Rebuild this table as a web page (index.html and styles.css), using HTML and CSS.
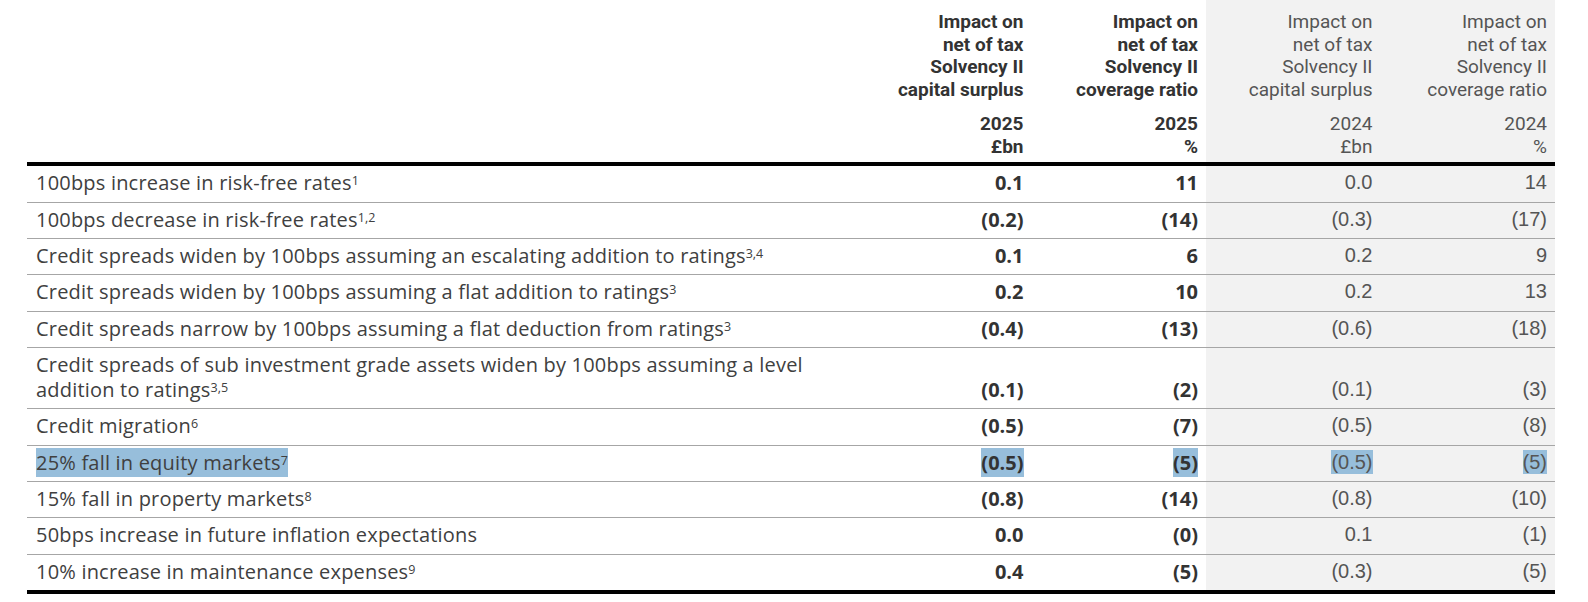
FILE: index.html
```html
<!DOCTYPE html>
<html lang="en">
<head>
<meta charset="utf-8">
<title>Solvency II sensitivities</title>
<link rel="stylesheet" href="styles.css">
</head>
<body>
<div class="page">
<table class="sens">
  <colgroup>
    <col class="c-label">
    <col class="c-num">
    <col class="c-num">
    <col class="c-num">
    <col class="c-num">
  </colgroup>
  <thead>
    <tr>
      <th class="lab"></th>
      <th class="cur"><div class="hd">Impact on<br>net of tax<br>Solvency II<br>capital surplus</div><div class="unit">2025<br>£bn</div></th>
      <th class="cur"><div class="hd">Impact on<br>net of tax<br>Solvency II<br>coverage ratio</div><div class="unit">2025<br>%</div></th>
      <th class="prior"><div class="hd">Impact on<br>net of tax<br>Solvency II<br>capital surplus</div><div class="unit">2024<br>£bn</div></th>
      <th class="prior"><div class="hd">Impact on<br>net of tax<br>Solvency II<br>coverage ratio</div><div class="unit">2024<br>%</div></th>
    </tr>
  </thead>
  <tbody>
    <tr><td class="lab">100bps increase in risk-free rates<sup>1</sup></td><td class="cur">0.1</td><td class="cur">11</td><td class="prior">0.0</td><td class="prior">14</td></tr>
    <tr><td class="lab">100bps decrease in risk-free rates<sup>1,2</sup></td><td class="cur">(0.2)</td><td class="cur">(14)</td><td class="prior">(0.3)</td><td class="prior">(17)</td></tr>
    <tr><td class="lab">Credit spreads widen by 100bps assuming an escalating addition to ratings<sup>3,4</sup></td><td class="cur">0.1</td><td class="cur">6</td><td class="prior">0.2</td><td class="prior">9</td></tr>
    <tr><td class="lab">Credit spreads widen by 100bps assuming a flat addition to ratings<sup>3</sup></td><td class="cur">0.2</td><td class="cur">10</td><td class="prior">0.2</td><td class="prior">13</td></tr>
    <tr><td class="lab">Credit spreads narrow by 100bps assuming a flat deduction from ratings<sup>3</sup></td><td class="cur">(0.4)</td><td class="cur">(13)</td><td class="prior">(0.6)</td><td class="prior">(18)</td></tr>
    <tr><td class="lab">Credit spreads of sub investment grade assets widen by 100bps assuming a level addition to ratings<sup>3,5</sup></td><td class="cur">(0.1)</td><td class="cur">(2)</td><td class="prior">(0.1)</td><td class="prior">(3)</td></tr>
    <tr><td class="lab">Credit migration<sup>6</sup></td><td class="cur">(0.5)</td><td class="cur">(7)</td><td class="prior">(0.5)</td><td class="prior">(8)</td></tr>
    <tr><td class="lab"><span class="sel">25% fall in equity markets<sup>7</sup></span></td><td class="cur"><span class="sel">(0.5)</span></td><td class="cur"><span class="sel">(5)</span></td><td class="prior"><span class="sel">(0.5)</span></td><td class="prior"><span class="sel">(5)</span></td></tr>
    <tr><td class="lab">15% fall in property markets<sup>8</sup></td><td class="cur">(0.8)</td><td class="cur">(14)</td><td class="prior">(0.8)</td><td class="prior">(10)</td></tr>
    <tr><td class="lab">50bps increase in future inflation expectations</td><td class="cur">0.0</td><td class="cur">(0)</td><td class="prior">0.1</td><td class="prior">(1)</td></tr>
    <tr><td class="lab">10% increase in maintenance expenses<sup>9</sup></td><td class="cur">0.4</td><td class="cur">(5)</td><td class="prior">(0.3)</td><td class="prior">(5)</td></tr>
  </tbody>
</table>
</div>
</body>
</html>
```
FILE: styles.css
```css
html, body {
  margin: 0;
  background: #ffffff;
}

.page {
  padding-left: 27px;
}

.sens {
  border-collapse: collapse;
  table-layout: fixed;
  width: 1528px;
}

.c-label { width: 830px; }
.c-num { width: 174.5px; }

.sens th,
.sens td {
  text-align: right;
  vertical-align: bottom;
}

.sens thead th {
  font-family: Roboto, "Open Sans", sans-serif;
  font-size: 19px;
  line-height: 22.7px;
  padding: 11px 8px 4px 0;
  border-bottom: 4px solid #000000;
  color: #333333;
}

.sens thead th.cur { font-weight: 700; }

.sens thead th.prior {
  font-weight: 400;
  color: #555555;
  background: #f2f2f2;
}

.unit { margin-top: 11px; }

.sens tbody td {
  font-size: 20px;
  line-height: 25px;
  padding: 4px 8px 6.33px 0;
  border-bottom: 1px solid #a6a6a6;
}

.sens tbody tr:last-child td {
  border-bottom: 4px solid #000000;
}

.sens td.lab {
  text-align: left;
  padding-left: 9px;
  padding-right: 10px;
  font-family: "Open Sans", sans-serif;
  letter-spacing: 0.2px;
  color: #404040;
}

.sens td.cur {
  font-family: "Open Sans", sans-serif;
  font-weight: 700;
  color: #333333;
}

.sens td.prior {
  font-family: "Liberation Sans", Arial, sans-serif;
  color: #555555;
  background: #f2f2f2;
}

sup {
  font-size: 12.5px;
  line-height: 0;
  vertical-align: 5px;
  letter-spacing: 0;
}

.sel {
  background: #97bedb;
  padding: 1px 0;
}
```
